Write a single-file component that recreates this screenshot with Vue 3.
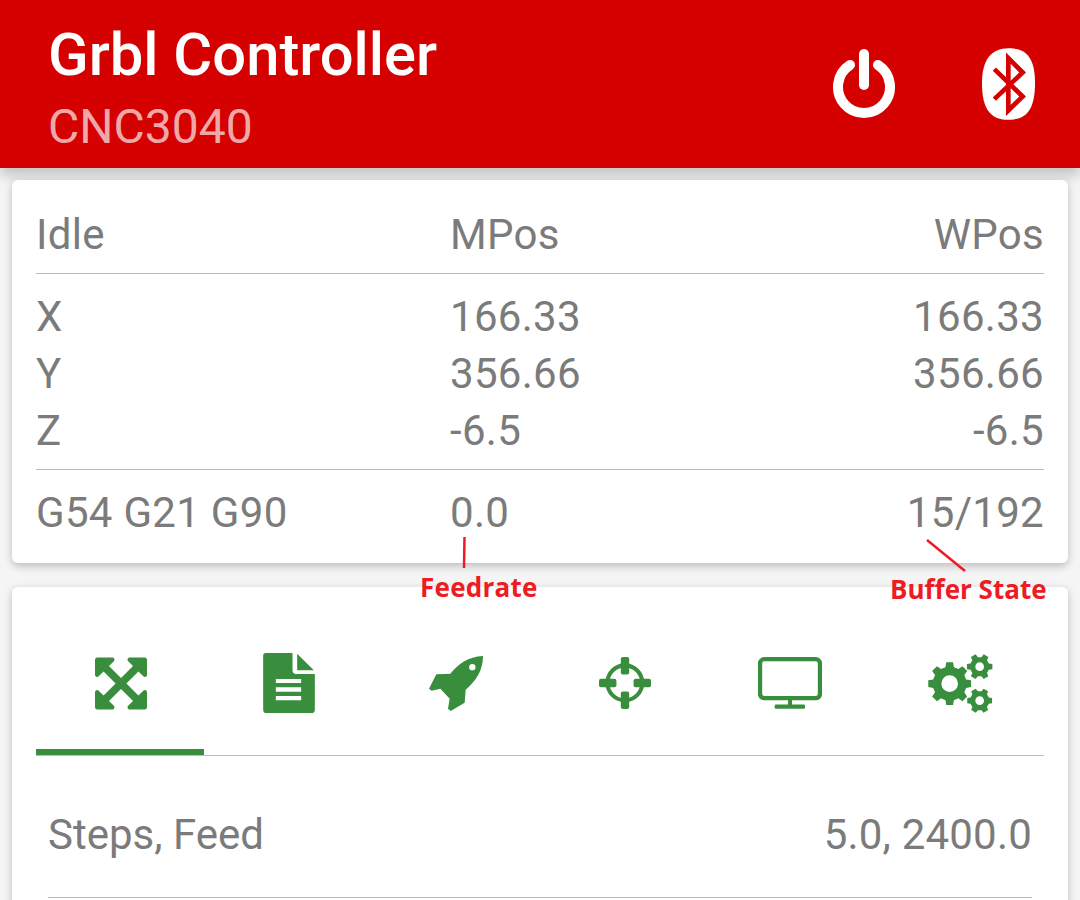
<template>
  <div class="screen">
    <header class="toolbar">
      <div class="titles">
        <div class="title">Grbl Controller</div>
        <div class="subtitle">CNC3040</div>
      </div>
      <div class="actions">
        <svg class="power" viewBox="0 0 64 70" width="64" height="70">
          <path d="M18 16 A26 26 0 1 0 46 16" fill="none" stroke="#fff" stroke-width="10" stroke-linecap="round" />
          <line x1="32" y1="5" x2="32" y2="36" stroke="#fff" stroke-width="10" stroke-linecap="round" />
        </svg>
        <svg class="bluetooth" viewBox="603 85 159 215" width="53" height="72">
          <path d="M683 85C740 85 762 120 762 190C762 270 735 300 683 300C630 300 603 270 603 190C603 120 630 85 683 85Z" fill="#fff" />
          <path d="M640 148L725 230L682 272V115L725 158L640 238" fill="none" stroke="#d50000" stroke-width="14" />
        </svg>
      </div>
    </header>

    <main class="content">
      <section class="card status">
        <div class="row head">
          <span>Idle</span><span>MPos</span><span>WPos</span>
        </div>
        <div class="axes">
          <div v-for="axis in axes" :key="axis.name" class="row">
            <span>{{ axis.name }}</span><span>{{ axis.mpos }}</span><span>{{ axis.wpos }}</span>
          </div>
        </div>
        <div class="row foot">
          <span>G54 G21 G90</span><span>0.0</span><span>15/192</span>
        </div>
      </section>

      <section class="card controls">
        <nav class="tabs">
          <div v-for="(tab, i) in tabs" :key="tab" class="tab" :class="[tab, { active: i === 0 }]">
            <svg v-if="tab === 'jog'" viewBox="0 0 1536 1536" width="52" height="53">
              <path fill="#388e3c" d="M1283 413l-355 355 355 355 144-144q29-31 70-14 39 17 39 59v448q0 26-19 45t-45 19h-448q-42 0-59-40-17-39 14-69l144-144-355-355-355 355 144 144q31 30 14 69-17 40-59 40h-448q-26 0-45-19t-19-45v-448q0-42 40-59 39-17 69 14l144 144 355-355-355-355-144 144q-19 19-45 19-12 0-24-5-40-17-40-59v-448q0-26 19-45t45-19h448q42 0 59 40 17 39-14 69l-144 144 355 355 355-355-144-144q-31-30-14-69 17-40 59-40h448q26 0 45 19t19 45v448q0 42-39 59-13 5-25 5-26 0-45-19z" />
            </svg>
            <svg v-else-if="tab === 'file'" viewBox="610 70 155 180" width="52" height="60">
              <path fill="#388e3c" d="M618 70H698V122Q698 133 709 133H765V240Q765 250 755 250H620Q610 250 610 240V78Q610 70 618 70Z" />
              <path fill="#388e3c" d="M712 72L762 122H712Z" />
              <path fill="#fff" d="M648 148H724V160H648ZM648 173H724V186H648ZM648 199H724V212H648Z" />
            </svg>
            <svg v-else-if="tab === 'rocket'" viewBox="88 77 162 165" width="54" height="55">
              <path fill="#388e3c" fill-rule="evenodd" d="M250 77C205 79 178 100 152 130L110 132L88 175L96 181L122 175L150 205L145 235L153 242L195 217L198 178C230 150 250 120 250 77ZM218 101A9.500 9.500 0 1 1 218 120A9.500 9.500 0 1 1 218 101Z" />
            </svg>
            <svg v-else-if="tab === 'probe'" viewBox="597 83 155 155" width="52" height="52">
              <circle cx="674" cy="160" r="52" fill="none" stroke="#388e3c" stroke-width="12" />
              <rect x="662" y="83" width="25" height="52" rx="6" fill="#388e3c" />
              <rect x="662" y="186" width="25" height="52" rx="6" fill="#388e3c" />
              <rect x="597" y="148" width="52" height="25" rx="6" fill="#388e3c" />
              <rect x="700" y="148" width="52" height="25" rx="6" fill="#388e3c" />
            </svg>
            <svg v-else-if="tab === 'console'" viewBox="85 83 192 155" width="64" height="52">
              <rect x="91" y="89" width="180" height="117" rx="13" fill="none" stroke="#388e3c" stroke-width="13" />
              <rect x="175" y="210" width="12" height="18" fill="#388e3c" />
              <rect x="135" y="225" width="91" height="13" rx="4" fill="#388e3c" />
            </svg>
            <svg v-else viewBox="593 68 195 177" width="65" height="59">
              <path v-for="g in gears" :key="g.cy + g.cx" :d="g.d" fill="#388e3c" fill-rule="evenodd" />
            </svg>
          </div>
        </nav>
        <div class="setting">
          <span>Steps, Feed</span><span class="value">5.0, 2400.0</span>
        </div>
      </section>

      <svg class="marks" width="1080" height="900">
        <line x1="464.500" y1="537" x2="464" y2="568" stroke="#ed1c24" stroke-width="2.500" />
        <line x1="927" y1="540" x2="965" y2="571" stroke="#ed1c24" stroke-width="2.500" />
      </svg>
      <span class="note feedrate">Feedrate</span>
      <span class="note buffer">Buffer State</span>
    </main>
  </div>
</template>

<script setup>
const axes = [
  { name: 'X', mpos: '166.33', wpos: '166.33' },
  { name: 'Y', mpos: '356.66', wpos: '356.66' },
  { name: 'Z', mpos: '-6.5', wpos: '-6.5' }
]

const tabs = ['jog', 'file', 'rocket', 'probe', 'console', 'settings']

// cog outline with a round hole, teeth are simple trapezoids
const gearPath = (cx, cy, outer, root, teeth, hole, start) => {
  const step = (Math.PI * 2) / teeth
  const pts = []
  for (let i = 0; i < teeth; i++) {
    const a = start + i * step
    const at = (r, d) => `${(cx + r * Math.cos(a + d)).toFixed(1)} ${(cy + r * Math.sin(a + d)).toFixed(1)}`
    pts.push(at(root, -step * 0.32), at(outer, -step * 0.2), at(outer, step * 0.2), at(root, step * 0.32))
  }
  return `M${pts.join('L')}Z M${cx + hole} ${cy}A${hole} ${hole} 0 1 0 ${cx - hole} ${cy}A${hole} ${hole} 0 1 0 ${cx + hole} ${cy}Z`
}

const gears = [
  { cx: 658, cy: 157, d: gearPath(658, 157, 65, 51, 8, 25, -Math.PI / 2) },
  { cx: 748, cy: 106, d: gearPath(748, 106, 39, 29, 6, 13, -Math.PI / 3) },
  { cx: 748, cy: 208, d: gearPath(748, 208, 38, 29, 6, 13, -Math.PI / 3) }
]
</script>

<style scoped>
.screen {
  width: 1080px;
  height: 900px;
  overflow: hidden;
  background: #f5f5f5;
  font-family: Roboto, "Liberation Sans", sans-serif;
  color: #7b7b7b;
}

.toolbar {
  height: 168px;
  box-sizing: border-box;
  padding: 0 45px 0 48px;
  background: #d50000;
  display: flex;
  align-items: flex-start;
  justify-content: space-between;
  box-shadow: 0 8px 12px rgba(0, 0, 0, 0.2);
  position: relative;
}

.title {
  margin-top: 21px;
  font-size: 59.700px;
  line-height: 68px;
  font-weight: 500;
  color: #fff;
}

.subtitle {
  margin-top: 8px;
  font-size: 48px;
  line-height: 60px;
  color: rgba(255, 255, 255, 0.68);
}

.actions {
  display: flex;
  gap: 86px;
  margin-top: 48px;
}

.power {
  margin-top: 1px;
}

.content {
  position: relative;
  padding: 12px;
  display: flex;
  flex-direction: column;
  gap: 24px;
}

.card {
  background: #fff;
  border-radius: 6px;
  box-shadow: 0 3px 8px rgba(0, 0, 0, 0.24);
  padding: 0 24px;
}

.status {
  height: 383px;
  box-sizing: border-box;
  padding-top: 26px;
}

.row {
  display: grid;
  grid-template-columns: 414px 1fr auto;
  font-size: 42px;
  line-height: 57px;
  letter-spacing: 0.3px;
}

.head {
  padding-bottom: 10px;
  border-bottom: 1px solid #bdbdbd;
}

.axes {
  padding: 14px 0 10px;
}

.foot {
  padding-top: 14px;
  border-top: 1px solid #bdbdbd;
}

.controls {
  padding-top: 24px;
  min-height: 400px;
}

.tabs {
  display: grid;
  grid-template-columns: repeat(6, 1fr);
  border-bottom: 1px solid #bdbdbd;
}

.tab {
  height: 144px;
  box-sizing: border-box;
  display: flex;
  align-items: center;
  justify-content: center;
}

.tab.active {
  box-shadow: inset 0 -6px 0 #388e3c;
}

.tab.jog {
  padding-left: 1px;
}

.tab.file,
.tab.probe {
  padding-left: 2px;
}

.tab.console {
  padding-right: 4px;
}

.setting {
  display: flex;
  justify-content: space-between;
  margin: 0 12px;
  padding: 50px 0 34px;
  font-size: 42px;
  line-height: 57px;
  border-bottom: 1px solid #bdbdbd;
}

.value {
  letter-spacing: 0.2px;
}

.marks {
  position: absolute;
  left: 0;
  top: -168px;
  pointer-events: none;
}

.note {
  position: absolute;
  font-family: "Open Sans", sans-serif;
  font-weight: 700;
  font-size: 26px;
  line-height: 32px;
  color: #ed1c24;
  white-space: nowrap;
}

.feedrate {
  left: 420px;
  top: 403px;
  letter-spacing: 0.25px;
}

.buffer {
  left: 890px;
  top: 405px;
}
</style>

<style>
body {
  overflow: hidden;
}
</style>
